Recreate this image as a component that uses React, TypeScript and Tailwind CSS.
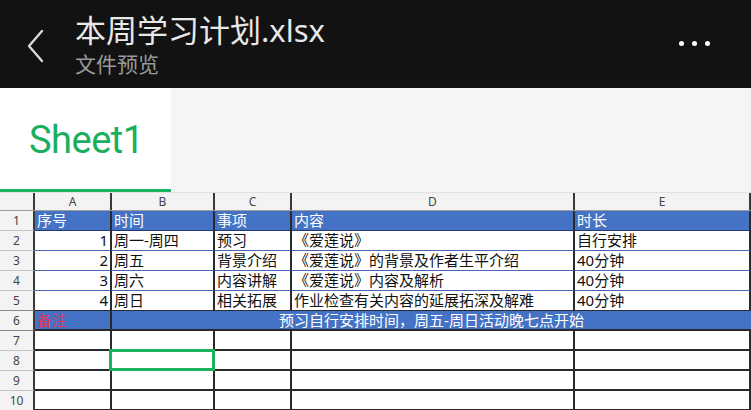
import React from 'react';

const COLS = [77, 103, 77, 283, 176];
const LETTERS = ['A', 'B', 'C', 'D', 'E'];

const rows: string[][] = [
  ['序号', '时间', '事项', '内容', '时长'],
  ['1', '周一-周四', '预习', '《爱莲说》', '自行安排'],
  ['2', '周五', '背景介绍', '《爱莲说》的背景及作者生平介绍', '40分钟'],
  ['3', '周六', '内容讲解', '《爱莲说》内容及解析', '40分钟'],
  ['4', '周日', '相关拓展', '作业检查有关内容的延展拓深及解难', '40分钟'],
];

const cjk = { fontFamily: '"Noto Sans", "Noto Sans CJK SC", sans-serif' };

function RowNum({ n, bottom }: { n: number; bottom?: string }) {
  return (
    <div
      className={`w-[35px] shrink-0 h-full flex items-center justify-center bg-[#f3f3f3] text-[12px] text-[#444] border-r-2 border-r-[#3a3a3a] border-b ${bottom ?? 'border-b-[#c4c4c4]'}`}
    >
      {n}
    </div>
  );
}

export default function App() {
  return (
    <div className="w-[751px] h-[410px] overflow-hidden bg-white" style={cjk}>
      {/* top bar */}
      <div className="h-[88px] bg-[#121212] flex items-center">
        <svg width="20" height="34" viewBox="0 0 20 34" className="ml-[26px] mt-[4px]">
          <polyline points="16,2 3,17 16,32" fill="none" stroke="#d8d8d8" strokeWidth="2.4" strokeLinecap="round" strokeLinejoin="round" />
        </svg>
        <div className="ml-[29px] flex flex-col">
          <div className="text-[31px] leading-[34px] text-[#e8e8e8] mt-[2px]">本周学习计划.xlsx</div>
          <div className="text-[21px] leading-[26px] text-[#9a9a9a] mt-[4px]">文件预览</div>
        </div>
        <div className="ml-auto mr-[41px] flex items-center gap-[8px] mt-[-2px]">
          <span className="w-[5px] h-[5px] rounded-full bg-white" />
          <span className="w-[5px] h-[5px] rounded-full bg-white" />
          <span className="w-[5px] h-[5px] rounded-full bg-white" />
        </div>
      </div>

      {/* sheet tabs */}
      <div className="h-[105px] flex border-b border-b-[#e2e2e2]">
        <div className="w-[171px] flex flex-col bg-white">
          <div className="flex-1 flex items-center pl-[29px] pt-[4px] text-[38px] text-[#1aaf5d] tracking-[-0.5px]" style={{ fontFamily: 'Roboto, "Noto Sans", sans-serif' }}>
            Sheet1
          </div>
          <div className="h-[3px] bg-[#1bb35f]" />
        </div>
        <div className="flex-1 bg-[#f5f5f5]" />
      </div>

      {/* column header */}
      <div className="h-[18px] flex bg-[#f3f3f3] border-b border-b-[#9c9c9c]">
        <div className="w-[35px] shrink-0 border-r-2 border-r-[#3a3a3a]" />
        {COLS.map((w, i) => (
          <div
            key={i}
            style={{ width: w }}
            className="shrink-0 flex items-center justify-center text-[12px] text-[#444] border-r-2 border-r-[#3a3a3a]"
          >
            {LETTERS[i]}
          </div>
        ))}
      </div>

      {/* data rows */}
      {rows.map((r, ri) => {
        const header = ri === 0;
        const bottom = header ? 'border-b-[#24396e]' : ri === 4 ? 'border-b-[#2c2c2c]' : 'border-b-[#4a66b8]';
        return (
          <div key={ri} className={`h-[20px] flex ${header ? 'bg-[#4472c4]' : 'bg-white'}`}>
            <RowNum n={ri + 1} bottom={ri === 4 ? 'border-b-[#888]' : undefined} />
            {r.map((c, ci) => (
              <div
                key={ci}
                style={{ width: COLS[ci] }}
                className={`shrink-0 h-full flex items-center px-[2px] text-[15px] whitespace-nowrap overflow-hidden border-r-2 border-r-[#2a2a2a] border-b ${bottom} ${
                  header ? 'text-white' : 'text-[#111]'
                } ${ci === 0 && !header ? 'justify-end' : ''}`}
              >
                {c}
              </div>
            ))}
          </div>
        );
      })}

      {/* row 6: merged note */}
      <div className="h-[20px] flex bg-[#4472c4]">
        <RowNum n={6} bottom="border-b-[#888]" />
        <div className="w-[77px] shrink-0 h-full flex items-center px-[2px] text-[15px] text-[#e2355c] border-r-2 border-r-[#2a2a2a] border-b-2 border-b-[#2a2a2a]">
          备注
        </div>
        <div className="w-[639px] shrink-0 h-full flex items-center justify-center text-[15px] text-white whitespace-nowrap border-b-2 border-b-[#2a2a2a]">
          预习自行安排时间，周五-周日活动晚七点开始
        </div>
      </div>

      {/* empty rows */}
      {[7, 8, 9, 10].map((n) => (
        <div key={n} className="h-[20px] flex bg-white">
          <RowNum n={n} />
          {COLS.map((w, ci) => (
            <div
              key={ci}
              style={{ width: w }}
              className="relative shrink-0 h-full border-r-2 border-r-[#2a2a2a] border-b-2 border-b-[#2a2a2a]"
            >
              {n === 8 && ci === 1 && (
                <div className="absolute -left-[3px] -top-[2px] -right-[2px] -bottom-[2px] border-[3px] border-[#19b25b]" />
              )}
            </div>
          ))}
        </div>
      ))}
    </div>
  );
}
